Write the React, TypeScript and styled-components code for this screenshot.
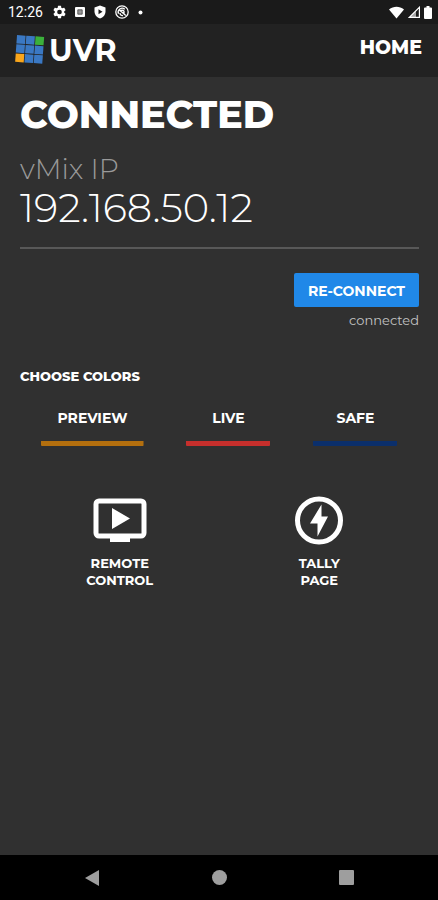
import React from "react";
import styled, { createGlobalStyle } from "styled-components";

const GlobalStyle = createGlobalStyle`
  *, *::before, *::after { box-sizing: border-box; }
  body {
    margin: 0;
    background: #303030;
    color: #fff;
    font-family: Montserrat, Inter, sans-serif;
  }
  h1, h2, p { margin: 0; }
  svg { display: block; flex: none; }
`;

const Screen = styled.div`
  min-height: 100vh;
  display: flex;
  flex-direction: column;
`;

const StatusBar = styled.div`
  display: flex;
  align-items: center;
  justify-content: space-between;
  height: 24px;
  padding: 0 6px 0 8px;
  background: #1a1a1a;
  font-family: Roboto, sans-serif;
  font-size: 14px;
`;

const StatusGroup = styled.div<{ $gap: number }>`
  display: flex;
  align-items: center;
  gap: ${(p) => p.$gap}px;
`;

const Clock = styled.time`
  width: 36px;
`;

const Header = styled.header`
  display: flex;
  align-items: center;
  justify-content: space-between;
  height: 53px;
  padding: 0 16px 0 15px;
  background: #222;
`;

const Brand = styled.div`
  display: flex;
  align-items: center;
  gap: 3px;
  font-size: 30px;
  line-height: 36px;
  font-weight: 700;
`;

const HomeLink = styled.a`
  margin-bottom: 6px;
  color: #fff;
  font-size: 19px;
  line-height: 24px;
  font-weight: 800;
  text-decoration: none;
`;

const Main = styled.main`
  flex: 1;
  padding: 16px 19px 16px 20px;
`;

const Title = styled.h1`
  font-size: 38px;
  line-height: 44px;
  font-weight: 800;
`;

const Address = styled.section`
  margin-top: 16px;
  padding-bottom: 16px;
  border-bottom: 2px solid #585858;
`;

const AddressLabel = styled.p`
  color: #9a9a9a;
  font-size: 28px;
  line-height: 32px;
  font-weight: 300;
`;

const AddressValue = styled.p`
  font-size: 40px;
  line-height: 46px;
  font-weight: 300;
`;

const Connection = styled.section`
  display: flex;
  flex-direction: column;
  align-items: flex-end;
  gap: 4px;
  margin-top: 24px;
`;

const ReconnectButton = styled.button`
  height: 34px;
  padding: 2px 14px 0;
  border: 0;
  border-radius: 2px;
  background: #2088e8;
  color: #fff;
  font: inherit;
  font-size: 14px;
  font-weight: 700;
`;

const ConnectionState = styled.p`
  color: #c4c4c4;
  font-size: 13px;
  line-height: 18px;
  font-weight: 400;
`;

const SectionTitle = styled.h2`
  margin-top: 38px;
  font-size: 13px;
  line-height: 18px;
  font-weight: 800;
`;

const Colors = styled.div`
  display: flex;
  justify-content: space-around;
  margin-top: 16px;
`;

const ColorButton = styled.button<{ $color: string }>`
  min-width: 84px;
  height: 45px;
  padding: 0 16px 12px;
  border: 0;
  background: linear-gradient(${(p) => p.$color}, ${(p) => p.$color}) bottom / 100% 5px no-repeat;
  border-radius: 1px;
  color: #fff;
  font: inherit;
  font-size: 14px;
  font-weight: 700;
`;

const Pages = styled.nav`
  display: grid;
  grid-template-columns: 1fr 1fr;
  justify-items: center;
  margin-top: 50px;
`;

const PageLink = styled.a`
  display: flex;
  flex-direction: column;
  align-items: center;
  gap: 9px;
  color: #fff;
  font-size: 13px;
  line-height: 17px;
  font-weight: 700;
  text-align: center;
  text-decoration: none;
`;

const NavBar = styled.nav`
  display: flex;
  align-items: center;
  justify-content: center;
  gap: 94px;
  height: 45px;
  background: #000;
`;

const NavButton = styled.button`
  display: grid;
  place-items: center;
  width: 33px;
  height: 32px;
  padding: 0;
  border: 0;
  background: none;
  color: #9e9e9e;
`;

const Logo = () => (
  <svg width="31" height="32" viewBox="0 0 31 32" aria-hidden="true">
    <g transform="rotate(4 15 15)">
      {[0, 1, 2].map((row) =>
        [0, 1, 2].map((col) => (
          <rect
            key={`${row}${col}`}
            x={1 + col * 9.3}
            y={1 + row * 9.2}
            width="8.6"
            height="8.4"
            fill={row === 0 && col === 2 ? "#3bb03b" : row === 2 && col === 0 ? "#f9a61c" : "#3a78c3"}
          />
        ))
      )}
    </g>
  </svg>
);

const GearIcon = () => (
  <svg width="13" height="14" viewBox="2 2 20 20" fill="#fff" aria-hidden="true">
    <path d="M19.14 12.94c.04-.3.06-.61.06-.94s-.02-.64-.07-.94l2.03-1.58a.49.49 0 0 0 .12-.61l-1.92-3.32a.49.49 0 0 0-.59-.22l-2.39.96a7 7 0 0 0-1.62-.94l-.36-2.54A.48.48 0 0 0 13.92 2.4h-3.84a.48.48 0 0 0-.47.41l-.36 2.54c-.59.24-1.13.57-1.62.94l-2.39-.96a.49.49 0 0 0-.59.22L2.73 8.87a.49.49 0 0 0 .12.61l2.03 1.58a6.6 6.6 0 0 0 0 1.88l-2.03 1.58a.49.49 0 0 0-.12.61l1.92 3.32c.12.22.37.29.59.22l2.39-.96c.5.38 1.03.7 1.62.94l.36 2.54c.05.24.24.41.48.41h3.84c.24 0 .44-.17.47-.41l.36-2.54a7 7 0 0 0 1.62-.94l2.39.96c.22.08.47 0 .59-.22l1.92-3.32a.49.49 0 0 0-.12-.61zM12 15.6a3.6 3.6 0 1 1 0-7.2 3.6 3.6 0 0 1 0 7.2z" />
  </svg>
);

const CardIcon = () => (
  <svg width="10" height="10" viewBox="0 0 10 10" aria-hidden="true">
    <rect width="10" height="10" rx="1" fill="#fff" />
    <path d="M2.8 2.8h4.4v4.4H2.8z" fill="#999" stroke="#444" strokeWidth="0.8" />
  </svg>
);

const ShieldIcon = () => (
  <svg width="12" height="14" viewBox="0 0 12 14" aria-hidden="true">
    <path d="M6 .5 11.5 2.6V6.5C11.5 9.8 9 12.6 6 13.5 3 12.6.5 9.8.5 6.5V2.6Z" fill="#fff" />
    <path d="M4.5 4.2 8.5 6.7 4.5 9.2Z" fill="#1a1a1a" />
  </svg>
);

const SyncIcon = () => (
  <svg width="14" height="14" viewBox="0 0 14 14" fill="none" stroke="#fff" aria-hidden="true">
    <circle cx="7" cy="7" r="6.2" strokeWidth="1.3" />
    <path d="M3.5 8.8A4 4 0 0 1 9.8 4.2M3.8 4.5 10.8 10.5M5 6.5A2.4 2.4 0 0 1 9 6.2V8.5M5 8A2.4 2.4 0 0 0 8 10.5" strokeWidth="1.3" />
  </svg>
);

const DotIcon = () => (
  <svg width="5" height="5" viewBox="0 0 5 5" aria-hidden="true">
    <circle cx="2.5" cy="2.5" r="2" fill="#fff" />
  </svg>
);

const WifiIcon = () => (
  <svg width="15" height="13" viewBox="0 0 15 13" aria-hidden="true">
    <path d="M7.5 12.5 0 3.5C4.5-.2 10.5-.2 15 3.5Z" fill="#fff" />
  </svg>
);

const SignalIcon = () => (
  <svg width="12" height="12" viewBox="0 0 12 12" aria-hidden="true">
    <path d="M1.3 11.4 11.4 1.3V11.4Z" fill="none" stroke="#fff" strokeWidth="1.2" />
    <path d="M1 11.5 8 4.5V11.5Z" fill="#fff" fillOpacity="0.6" />
  </svg>
);

const BatteryIcon = () => (
  <svg width="8" height="13" viewBox="0 0 8 13" aria-hidden="true">
    <path d="M2.5 0h3v1.5H7a1 1 0 0 1 1 1V12a1 1 0 0 1-1 1H1a1 1 0 0 1-1-1V2.5a1 1 0 0 1 1-1h1.5Z" fill="#fff" />
  </svg>
);

const RemoteIcon = () => (
  <svg width="54" height="50" viewBox="0 0 54 50" aria-hidden="true">
    <rect x="3" y="5" width="48" height="35" rx="3" fill="none" stroke="#fff" strokeWidth="5" />
    <path d="M17 41H37V46H17ZM19 12 37 22.5 19 33Z" fill="#fff" />
  </svg>
);

const TallyIcon = () => (
  <svg width="50" height="50" viewBox="0 0 50 50" aria-hidden="true">
    <circle cx="25" cy="24.5" r="21.5" fill="none" stroke="#fff" strokeWidth="5" />
    <path d="M27.5 8.5V20.5H34L23.5 40.5V27.5H16Z" fill="#fff" />
  </svg>
);

export default function App() {
  return (
    <>
      <GlobalStyle />
      <Screen>
        <StatusBar>
          <StatusGroup $gap={9}>
            <Clock>12:26</Clock>
            <GearIcon />
            <CardIcon />
            <ShieldIcon />
            <SyncIcon />
            <DotIcon />
          </StatusGroup>
          <StatusGroup $gap={4}>
            <WifiIcon />
            <SignalIcon />
            <BatteryIcon />
          </StatusGroup>
        </StatusBar>
        <Header>
          <Brand>
            <Logo />
            UVR
          </Brand>
          <HomeLink href="#home">HOME</HomeLink>
        </Header>
        <Main>
          <Title>CONNECTED</Title>
          <Address>
            <AddressLabel>vMix IP</AddressLabel>
            <AddressValue>192.168.50.12</AddressValue>
          </Address>
          <Connection>
            <ReconnectButton type="button">RE-CONNECT</ReconnectButton>
            <ConnectionState role="status">connected</ConnectionState>
          </Connection>
          <SectionTitle>CHOOSE COLORS</SectionTitle>
          <Colors>
            <ColorButton type="button" $color="#b36f0e">PREVIEW</ColorButton>
            <ColorButton type="button" $color="#c62f2c">LIVE</ColorButton>
            <ColorButton type="button" $color="#0b2f6b">SAFE</ColorButton>
          </Colors>
          <Pages aria-label="Pages">
            <PageLink href="#remote">
              <RemoteIcon />
              <span>REMOTE<br />CONTROL</span>
            </PageLink>
            <PageLink href="#tally">
              <TallyIcon />
              <span>TALLY<br />PAGE</span>
            </PageLink>
          </Pages>
        </Main>
        <NavBar aria-label="System">
          <NavButton type="button" aria-label="Back">
            <svg width="14" height="16" viewBox="0 0 14 16"><path d="M0 8 14 0V16Z" fill="currentColor" /></svg>
          </NavButton>
          <NavButton type="button" aria-label="Home screen">
            <svg width="15" height="15" viewBox="0 0 15 15"><circle cx="7.5" cy="7.5" r="7.5" fill="currentColor" /></svg>
          </NavButton>
          <NavButton type="button" aria-label="Recent apps">
            <svg width="15" height="15" viewBox="0 0 15 15"><rect width="15" height="15" rx="1" fill="currentColor" /></svg>
          </NavButton>
        </NavBar>
      </Screen>
    </>
  );
}
